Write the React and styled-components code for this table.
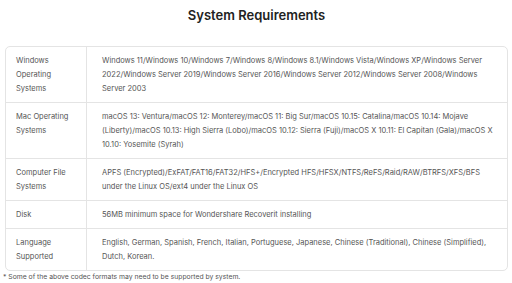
import React from "react";
import styled, { createGlobalStyle } from "styled-components";

const GlobalStyle = createGlobalStyle`
    html, body {
        margin: 0;
        padding: 0;
        background: #fff;
    }
    body {
        font-family: Inter, "Noto Sans", sans-serif;
        -webkit-font-smoothing: antialiased;
    }
`

const Page = styled.div`
    width: 512px;
    padding: 5px 4px 0 5px;
    box-sizing: border-box;
`

const Title = styled.h2`
    margin: 0 0 21px;
    text-align: center;
    font-size: 13px;
    line-height: 20px;
    font-weight: 600;
    color: #222;
`

const Table = styled.div`
    border: 1px solid #e4e4e4;
    border-radius: 5px;
    overflow: hidden;
`

const Row = styled.div`
    display: grid;
    grid-template-columns: 80px 1fr;
    border-top: ${(p) => (p.$first ? "none" : "1px solid #e4e4e4")};
`

const Cell = styled.div`
    padding: 7px ${(p) => (p.$label ? "10px" : "14px")} 6px ${(p) => (p.$label ? "10px" : "15px")};
    font-size: 7.5px;
    line-height: 14px;
    color: #555;
    border-left: ${(p) => (p.$label ? "none" : "1px solid #e4e4e4")};
`

const Note = styled.p`
    margin: 1px 0 0 -2px;
    font-size: 6.8px;
    line-height: 9px;
    color: #555;
`

const rows = [
    {
        label: "Windows Operating Systems",
        value:
            "Windows 11/Windows 10/Windows 7/Windows 8/Windows 8.1/Windows Vista/Windows XP/Windows Server 2022/Windows Server 2019/Windows Server 2016/Windows Server 2012/Windows Server 2008/Windows Server 2003",
    },
    {
        label: "Mac Operating Systems",
        value:
            "macOS 13: Ventura/macOS 12: Monterey/macOS 11: Big Sur/macOS 10.15: Catalina/macOS 10.14: Mojave (Liberty)/macOS 10.13: High Sierra (Lobo)/macOS 10.12: Sierra (Fuji)/macOS X 10.11: El Capitan (Gala)/macOS X 10.10: Yosemite (Syrah)",
    },
    {
        label: "Computer File Systems",
        value:
            "APFS (Encrypted)/ExFAT/FAT16/FAT32/HFS+/Encrypted HFS/HFSX/NTFS/ReFS/Raid/RAW/BTRFS/XFS/BFS under the Linux OS/ext4 under the Linux OS",
    },
    {
        label: "Disk",
        value: "56MB minimum space for Wondershare Recoverit installing",
    },
    {
        label: "Language Supported",
        value:
            "English, German, Spanish, French, Italian, Portuguese, Japanese, Chinese (Traditional), Chinese (Simplified), Dutch, Korean.",
    },
];

function App() {
    return (
        <Page>
            <GlobalStyle />
            <Title>System Requirements</Title>
            <Table>
                {rows.map((row, i) => (
                    <Row key={row.label} $first={i === 0}>
                        <Cell $label>{row.label}</Cell>
                        <Cell>{row.value}</Cell>
                    </Row>
                ))}
            </Table>
            <Note>* Some of the above codec formats may need to be supported by system.</Note>
        </Page>
    );
}

export default App;
